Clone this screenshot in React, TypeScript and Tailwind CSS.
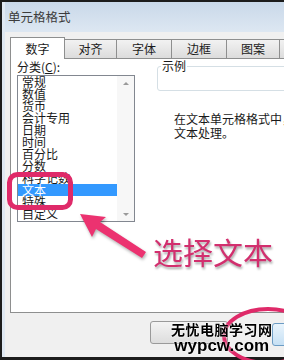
const tabs = [
  { label: '数字', w: 'w-[55px]', active: true },
  { label: '对齐', w: 'w-[52px]' },
  { label: '字体', w: 'w-[55px]' },
  { label: '边框', w: 'w-[55px]' },
  { label: '图案', w: 'w-[53px]' },
  { label: '保护', w: 'w-[50px]' },
];

const categories = ['常规', '数值', '货币', '会计专用', '日期', '时间', '百分比', '分数', '科学记数', '文本', '特殊', '自定义'];

export default function App() {
  return (
    <div className="relative w-[284px] h-[360px] overflow-hidden bg-[#1c1c1c] pt-[2px] pl-[2px] pb-[3px] font-['Noto_Sans_CJK_SC',sans-serif] text-[#1a1a1a]">
      <div className="h-full flex flex-col border-l-[3px] border-[#dfe8f2] bg-[#f0f0f0]">
        {/* Title bar */}
        <div className="h-[30px] shrink-0 flex items-center pl-[3px] text-[12.5px] text-[#3c3c3c] bg-gradient-to-b from-[#c9d8e9] to-[#dde7f2]">
          单元格格式
        </div>

        {/* Body */}
        <div className="flex-1 flex flex-col pl-[5px] pt-[5px]">
          <div className="flex items-end h-[21px] shrink-0">
            {tabs.map((t) =>
              t.active ? (
                <div key={t.label} className={`${t.w} h-[22px] shrink-0 -mb-px z-10 flex items-center justify-center bg-white border border-b-0 border-[#8e8f8f] text-[12px]`}>
                  {t.label}
                </div>
              ) : (
                <div key={t.label} className={`${t.w} h-[19px] shrink-0 flex items-center justify-center border border-l-0 border-b-0 border-[#8e8f8f] bg-gradient-to-b from-[#f2f2f2] to-[#dcdcdc] text-[12px]`}>
                  {t.label}
                </div>
              )
            )}
          </div>

          {/* Tab page */}
          <div className="w-[300px] h-[255px] shrink-0 bg-white border border-[#8e8f8f] flex">
            <div className="w-[125px] pl-[6px] shrink-0 flex flex-col">
              <div className="h-[16px] leading-[16px] text-[12px]">
                分类(<span className="underline">C</span>):
              </div>
              <div className="w-[118px] h-[147px] border border-[#828790] flex">
                <div className="flex-1 flex flex-col">
                  {categories.map((c) => (
                    <div
                      key={c}
                      className={`h-[12px] leading-[12px] pl-[4px] text-[12px] whitespace-nowrap ${c === '文本' ? 'bg-[#3399ff] text-white' : ''}`}
                    >
                      {c}
                    </div>
                  ))}
                </div>
                <div className="w-[17px] flex flex-col justify-between bg-[#f7f7f7]">
                  <div className="h-[14px] flex items-center justify-center">
                    <div className="w-0 h-0 border-x-[3px] border-x-transparent border-b-[3px] border-b-[#9a9a9a]" />
                  </div>
                  <div className="h-[14px] flex items-center justify-center">
                    <div className="w-0 h-0 border-x-[3px] border-x-transparent border-t-[3px] border-t-[#9a9a9a]" />
                  </div>
                </div>
              </div>
            </div>

            <div className="flex-1 pl-[21px] flex flex-col">
              <fieldset className="h-[32px] border border-[#d5dfe5] rounded-[3px]">
                <legend className="ml-[3px] px-[1px] text-[12px] leading-[14px]">示例</legend>
              </fieldset>
              <div className="mt-[21px] pl-[17px] text-[12px] leading-[14px] whitespace-nowrap">
                <div>在文本单元格格式中，数字作为</div>
                <div>文本处理。</div>
              </div>
            </div>
          </div>

          {/* Button strip */}
          <div className="flex-1 flex items-start pt-[8px] pl-[140px] gap-[44px]">
            <div className="w-[78px] h-[23px] shrink-0 rounded-[3px] border border-[#9a9a9a] bg-gradient-to-b from-[#f4f4f4] to-[#dddddd]" />
            <div className="w-[60px] h-[23px] shrink-0 mt-[2px] rounded-[3px] border border-[#6c9cc4] bg-gradient-to-b from-[#e9f4fc] to-[#c6e0f4]" />
          </div>
        </div>
      </div>

      {/* Annotations */}
      <svg className="absolute inset-0 pointer-events-none" width="284" height="360" viewBox="0 0 284 360">
        <rect x="9.5" y="174.5" width="61" height="33" rx="8" fill="none" stroke="#df2a69" strokeWidth="5" />
        <g style={{ filter: 'drop-shadow(1px 2px 1.5px rgba(0,0,0,0.3))' }}>
          <polygon points="80,214 106,217 100,222 146,252 142,258 96,229 92,237" fill="#ec3270" />
        </g>
        <ellipse cx="268" cy="336" rx="44" ry="27" fill="none" stroke="#df2a69" strokeWidth="4" />
      </svg>

      <div className="absolute left-[153px] top-[233px] text-[30px] leading-[36px] text-[#d22f6e] drop-shadow-[1px_2px_1px_rgba(0,0,0,0.35)]">
        选择文本
      </div>

      <div className="absolute left-[171px] top-[321px] flex flex-col items-center font-bold text-black drop-shadow-[0_0_1px_rgba(255,255,255,1)]">
        <div className="text-[14px] leading-[17px] tracking-[0.5px]">无忧电脑学习网</div>
        <div className="text-[17px] leading-[15px] font-['Liberation_Sans',sans-serif]">wypcw.com</div>
      </div>
    </div>
  );
}
